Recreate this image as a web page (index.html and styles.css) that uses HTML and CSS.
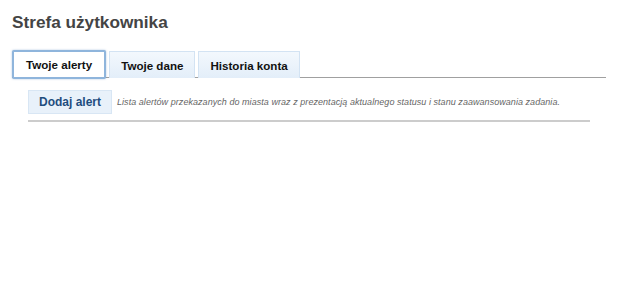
FILE: index.html
```html
<!DOCTYPE html>
<html lang="pl">
<head>
    <meta charset="UTF-8">
    <title>Strefa użytkownika</title>
    <link rel="stylesheet" href="styles.css">
</head>
<body>

    <div class="page">
        <h1>Strefa użytkownika</h1>

        <!-- Zakladki -->
        <ul class="tabs">
            <li class="tab active">Twoje alerty</li>
            <li class="tab">Twoje dane</li>
            <li class="tab">Historia konta</li>
        </ul>

        <div class="panel">
            <div class="toolbar">
                <button class="add-btn">Dodaj alert</button>
                <p class="desc">Lista alertów przekazanych do miasta wraz z prezentacją aktualnego statusu i stanu zaawansowania zadania.</p>
            </div>
        </div>
    </div>

</body>
</html>
```

FILE: styles.css
```css
* {
    margin: 0;
    padding: 0;
    box-sizing: border-box;
}

body {
    font-family: 'Liberation Sans', Arial, sans-serif;
    background-color: #ffffff;
}

.page {
    padding: 12px 14px 0 12px;
}

h1 {
    font-size: 17.2px;
    color: #444444;
    font-weight: bold;
    line-height: 21px;
}

/* Tabs */
.tabs {
    list-style: none;
    display: flex;
    gap: 3px;
    margin-top: 17px;
    border-bottom: 1px solid #a0a0a0;
    height: 28px;
}

.tab {
    font-size: 11.6px;
    font-weight: bold;
    color: #111111;
    padding: 0 11px;
    height: 27px;
    line-height: 27px;
    background: linear-gradient(#f3f8fd, #e3eef9);
    border: 1px solid #d3e3f3;
    border-bottom: none;
    margin-top: 1px;
}

.tab.active {
    background: #ffffff;
    border: 2px solid #8fb5dc;
    border-radius: 2px;
    padding: 0 12px;
    height: 29px;
    line-height: 25px;
    margin-top: 0;
    box-shadow: 0 0 2px rgba(80, 130, 190, 0.5);
}

/* Panel */
.panel {
    padding: 12px 16px 0 16px;
}

.toolbar {
    display: flex;
    align-items: center;
    padding-bottom: 6px;
    border-bottom: 2px solid #cccccc;
}

.add-btn {
    font-family: 'Liberation Sans', Arial, sans-serif;
    font-size: 12px;
    font-weight: bold;
    color: #1e4d7e;
    background-color: #e8f1fa;
    border: 1px solid #d8e6f4;
    height: 24px;
    width: 84px;
}

.desc {
    font-size: 9px;
    font-style: italic;
    color: #666666;
    margin-left: 5px;
    letter-spacing: 0.05px;
}
```
